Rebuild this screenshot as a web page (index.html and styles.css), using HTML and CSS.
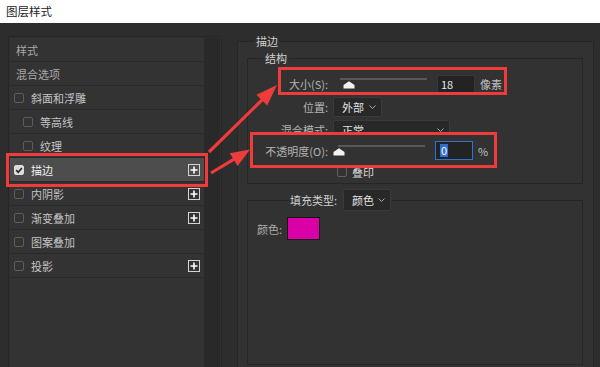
FILE: index.html
```html
<!DOCTYPE html>
<html lang="zh">
<head>
<meta charset="utf-8">
<title>图层样式</title>
<link rel="stylesheet" href="styles.css">
</head>
<body>
<div class="title">图层样式</div>
<div class="main">
  <div class="left">
    <div class="list">
      <div class="row plain">样式</div>
      <div class="row plain">混合选项</div>
      <div class="row"><span class="cb"></span>斜面和浮雕</div>
      <div class="row sub"><span class="cb"></span>等高线</div>
      <div class="row sub"><span class="cb"></span>纹理</div>
      <div class="row active"><span class="cb on"><svg width="10" height="10" viewBox="0 0 10 10"><path d="M2.2 5.2 L4.2 7.2 L7.9 3" fill="none" stroke="#2a2a2a" stroke-width="1.7"/></svg></span>描边<span class="plus"><svg width="12" height="12" viewBox="0 0 12 12"><rect x="0.5" y="0.5" width="11" height="11" fill="none" stroke="#d4d4d4"/><path d="M6 2.5V9.5M2.5 6H9.5" stroke="#fff" stroke-width="1.6"/></svg></span></div>
      <div class="row"><span class="cb"></span>内阴影<span class="plus"><svg width="12" height="12" viewBox="0 0 12 12"><rect x="0.5" y="0.5" width="11" height="11" fill="none" stroke="#d4d4d4"/><path d="M6 2.5V9.5M2.5 6H9.5" stroke="#fff" stroke-width="1.6"/></svg></span></div>
      <div class="row"><span class="cb"></span>渐变叠加<span class="plus"><svg width="12" height="12" viewBox="0 0 12 12"><rect x="0.5" y="0.5" width="11" height="11" fill="none" stroke="#d4d4d4"/><path d="M6 2.5V9.5M2.5 6H9.5" stroke="#fff" stroke-width="1.6"/></svg></span></div>
      <div class="row"><span class="cb"></span>图案叠加</div>
      <div class="row"><span class="cb"></span>投影<span class="plus"><svg width="12" height="12" viewBox="0 0 12 12"><rect x="0.5" y="0.5" width="11" height="11" fill="none" stroke="#d4d4d4"/><path d="M6 2.5V9.5M2.5 6H9.5" stroke="#fff" stroke-width="1.6"/></svg></span></div>
    </div>
    <div class="scroll"></div>
  </div>

  <fieldset class="outer">
    <legend class="lg-outer">描边</legend>
    <fieldset class="struct">
      <legend class="lg-struct">结构</legend>
      <div class="form">
        <div class="lbl">大小(S):</div>
        <div class="ctl">
          <div class="slider"><svg class="thumb" style="left:3px" width="12" height="8" viewBox="0 0 12 8"><path d="M6 0.3 L11.5 4 L11.5 7.6 L0.5 7.6 L0.5 4 Z" fill="#f2f2f2"/></svg></div>
          <div class="num">18</div>
          <span class="unit">像素</span>
        </div>

        <div class="lbl">位置:</div>
        <div class="ctl">
          <div class="dd dd-pos"><span>外部</span><svg width="7" height="4" viewBox="0 0 7 4"><polyline points="0.5,0.5 3.5,3.5 6.5,0.5" fill="none" stroke="#a8a8a8"/></svg></div>
        </div>

        <div class="lbl">混合模式:</div>
        <div class="ctl">
          <div class="dd dd-mode"><span>正常</span><svg width="7" height="4" viewBox="0 0 7 4"><polyline points="0.5,0.5 3.5,3.5 6.5,0.5" fill="none" stroke="#a8a8a8"/></svg></div>
        </div>

        <div class="lbl lift">不透明度(O):</div>
        <div class="ctl lift">
          <div class="slider slider-op"><svg class="thumb" style="left:-5px" width="12" height="8" viewBox="0 0 12 8"><path d="M6 0.3 L11.5 4 L11.5 7.6 L0.5 7.6 L0.5 4 Z" fill="#f2f2f2"/></svg></div>
          <div class="num num-active"><span class="sel">0</span></div>
          <span class="unit">%</span>
        </div>

        <div class="lbl"></div>
        <div class="ctl">
          <span class="cb cb-over"></span><span class="over-text">叠印</span>
        </div>
      </div>
    </fieldset>

    <fieldset class="fill">
      <legend class="lg-fill"><span class="fill-head"><span class="fill-lbl">填充类型:</span><span class="dd dd-fill"><span>颜色</span><svg width="7" height="4" viewBox="0 0 7 4"><polyline points="0.5,0.5 3.5,3.5 6.5,0.5" fill="none" stroke="#a8a8a8"/></svg></span></span></legend>
      <div class="fill-body">
        <div class="color-row"><span class="color-lbl">颜色:</span><span class="swatch"></span></div>
      </div>
    </fieldset>
  </fieldset>
</div>

<div class="mark m1"></div>
<div class="mark m2"></div>
<div class="mark m3"></div>
<svg class="arrows" width="600" height="367" viewBox="0 0 600 367">
  <line x1="209" y1="152" x2="262.5" y2="99.5" stroke="#ee3b3b" stroke-width="3.2"/>
  <polygon points="277,85 267.2,105.5 256.5,94.8" fill="#ee3b3b"/>
  <line x1="211" y1="173" x2="234.5" y2="158.8" stroke="#ee3b3b" stroke-width="3.2"/>
  <polygon points="250,149.5 237.6,166 229.8,153.2" fill="#ee3b3b"/>
</svg>
</body>
</html>
```

FILE: styles.css
```css
html, body {
  margin: 0;
  padding: 0;
}
body {
  width: 600px;
  height: 367px;
  overflow: hidden;
  position: relative;
  background: #2d2d2d;
  font-family: "Noto Sans CJK SC", "Noto Sans", sans-serif;
  font-size: 11px;
  color: #c2c2c2;
}
.title {
  height: 23px;
  line-height: 23px;
  padding-left: 6px;
  background: #ffffff;
  color: #222222;
  font-size: 11.5px;
}
.main {
  display: flex;
  align-items: flex-start;
  height: 344px;
  padding-left: 8px;
  background: #2d2d2d;
}

/* left list */
.left {
  box-sizing: border-box;
  width: 214px;
  height: 340px;
  margin-top: 13px;
  display: flex;
  border: 1px solid #262626;
  border-bottom: none;
  padding: 1px 0 0 1px;
  background: #2f2f2f;
}
.list {
  width: 194px;
  background: #333333;
}
.scroll {
  width: 17px;
  background: #292929;
  border-right: 1px solid #2f2f2f;
  box-sizing: border-box;
}
.row {
  height: 23px;
  border-bottom: 1px solid #292929;
  display: flex;
  align-items: center;
  padding-left: 4px;
  color: #c4c4c4;
}
.row.plain {
  padding-left: 6px;
  color: #a9a9a9;
}
.row.sub {
  padding-left: 13px;
}
.row.active {
  background: #4d4d4d;
  color: #f2f2f2;
}
.cb {
  box-sizing: border-box;
  width: 10px;
  height: 10px;
  border: 1px solid #5c5c5c;
  border-radius: 2px;
  margin-right: 7px;
  flex: none;
}
.cb.on {
  background: #dcdcdc;
  border-color: #dcdcdc;
  position: relative;
}
.cb.on svg {
  position: absolute;
  left: -1px;
  top: -1px;
}
.plus {
  margin-left: auto;
  margin-right: 4px;
  width: 12px;
  height: 12px;
  display: flex;
}

/* right side */
fieldset {
  margin: 0;
  min-width: 0;
  border: 1px solid #262626;
}
legend {
  padding: 0 2px;
  line-height: 14px;
  font-size: 11px;
}
.outer {
  box-sizing: border-box;
  width: 357px;
  margin-left: 15px;
  margin-top: 11px;
  padding: 3px 10px 3px 9px;
  background: #323232;
}
.lg-outer {
  margin-left: 7px;
  color: #d0d0d0;
}
.struct {
  padding: 8px 0 1px 0;
  background: #323232;
}
.lg-struct {
  margin-left: 15px;
  color: #d0d0d0;
}
.form {
  display: grid;
  grid-template-columns: 80px auto;
  grid-template-rows: 22px 24px 21px 21px 21px;
  column-gap: 5px;
  align-items: center;
}
.lbl {
  text-align: right;
  color: #b4b4b4;
  white-space: nowrap;
}
.ctl {
  display: flex;
  align-items: center;
}
.lift {
  position: relative;
  z-index: 2;
}
.slider {
  position: relative;
  width: 87px;
  height: 12px;
  margin-left: 7px;
  box-sizing: border-box;
  border-top: 2px solid #585858;
}
.slider-op {
  margin-left: 5px;
}
.thumb {
  position: absolute;
  top: 1px;
}
.num {
  box-sizing: border-box;
  width: 38px;
  height: 19px;
  margin-left: 10px;
  padding-left: 3px;
  background: #232323;
  border: 1px solid #383838;
  color: #e6e6e6;
  line-height: 17px;
}
.num-active {
  border-color: #2d74d2;
  padding-left: 4px;
}
.sel {
  display: inline-block;
  background: #2f6fd3;
  color: #ffffff;
  line-height: 13px;
  padding: 0 1px;
}
.unit {
  margin-left: 5px;
  color: #c0c0c0;
}
.dd {
  box-sizing: border-box;
  height: 20px;
  display: flex;
  align-items: center;
  justify-content: space-between;
  padding: 0 5px 0 8px;
  background: #282828;
  border: 1px solid #3a3a3a;
  border-radius: 2px;
  color: #e2e2e2;
}
.dd-pos {
  width: 49px;
}
.dd-mode {
  width: 117px;
}
.cb-over {
  margin-left: 4px;
  margin-right: 5px;
  border-color: #606060;
}
.over-text {
  color: #d8d8d8;
}

.fill {
  margin-top: 5px;
  padding: 6px 0 0 9px;
  background: #323232;
}
.lg-fill {
  margin-left: 33px;
  padding: 0;
  line-height: 22px;
}
.fill-head {
  display: inline-flex;
  align-items: center;
  vertical-align: top;
}
.fill-lbl {
  color: #d0d0d0;
}
.dd-fill {
  width: 48px;
  height: 22px;
  margin-left: 6px;
  padding-left: 8px;
}
.fill-body {
  height: 147px;
}
.color-row {
  display: flex;
  align-items: center;
}
.color-lbl {
  color: #aaaaaa;
}
.swatch {
  box-sizing: border-box;
  width: 33px;
  height: 23px;
  margin-left: 5px;
  background: #d900a7;
  border: 1px solid #141414;
}

/* annotations */
.mark {
  position: absolute;
  box-sizing: border-box;
  border: 3px solid #ee3b3b;
  pointer-events: none;
  z-index: 3;
}
.m1 {
  left: 6px;
  top: 153px;
  width: 202px;
  height: 34px;
}
.m2 {
  left: 278px;
  top: 67px;
  width: 229px;
  height: 28px;
}
.m3 {
  left: 250px;
  top: 132px;
  width: 247px;
  height: 36px;
  background: #323232;
  z-index: 1;
}
.arrows {
  position: absolute;
  left: 0;
  top: 0;
  z-index: 4;
  pointer-events: none;
}
```
